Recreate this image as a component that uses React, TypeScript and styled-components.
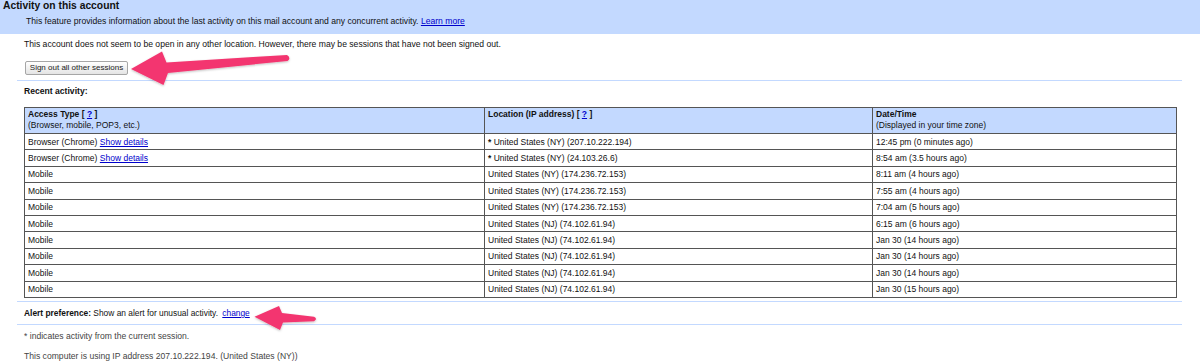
import React from 'react';
import styled, { createGlobalStyle } from 'styled-components';

const GlobalStyle = createGlobalStyle`
    body {
        margin: 0;
        background: #fff;
        font-family: "Liberation Sans", Arial, Helvetica, sans-serif;
        font-size: 8.6px;
        color: #111;
    }
`;

const Page = styled.div`
    position: relative;
    width: 1200px;
    height: 362px;
    overflow: hidden;
`;

const HeaderBand = styled.div`
    background: #c3d9ff;
    height: 34px;
    padding-left: 3px;
    box-sizing: border-box;
`;

const Title = styled.h1`
    margin: 0;
    font-size: 10.3px;
    line-height: 12px;
    font-weight: bold;
`;

const Intro = styled.div`
    margin: 3px 0 0 23px;
    line-height: 12px;
`;

const Content = styled.div`
    margin: 0 18px 0 17px;
`;

const Section = styled.div<{ $top: number; $bottom: number }>`
    border-bottom: 1px solid #c3d9ff;
    padding: ${(p) => p.$top}px 6px ${(p) => p.$bottom}px 7px;
`;

const Line = styled.div`
    line-height: 12px;
`;

const AlertLine = styled.div`
    line-height: 12px;
    font-size: 8.4px;
`;

const Note = styled.div<{ $gap: number }>`
    margin: ${(p) => p.$gap}px 0 0 7px;
    line-height: 12px;
    color: #444;
`;

const Link = styled.a<{ $gap?: number }>`
    color: #0000cc;
    text-decoration: underline;
    cursor: pointer;
    margin-left: ${(p) => p.$gap || 0}px;
`;

const Button = styled.button`
    display: block;
    margin: 11px 0 0 1px;
    height: 14px;
    width: 103px;
    padding: 0;
    font-family: "Liberation Sans", Arial, sans-serif;
    font-size: 8px;
    line-height: 12px;
    color: #222;
    background: linear-gradient(#ffffff, #e4e4e4);
    border: 1px solid #a6a6a6;
    border-radius: 2px;
`;

const Table = styled.table`
    margin-top: 10px;
    width: 1152px;
    table-layout: fixed;
    border-collapse: collapse;
    border: 1px solid #3f3f3f;
    font-size: 8.5px;
`;

const HeadCell = styled.th`
    background: #c3d9ff;
    border: 1px solid #555;
    padding: 1px 3px 2px;
    text-align: left;
    font-weight: normal;
    line-height: 11px;
    vertical-align: top;
`;

const Cell = styled.td`
    border: 1px solid #555;
    padding: 1.5px 3px;
    line-height: 12.4px;
    white-space: nowrap;
`;

const Star = styled.b`
    font-weight: bold;
`;

const Arrows = styled.svg`
    position: absolute;
    left: 0;
    top: 0;
    pointer-events: none;
`;

type Row = { access: string; details?: boolean; current?: boolean; location: string; time: string };

const rows: Row[] = [
    { access: 'Browser (Chrome)', details: true, current: true, location: 'United States (NY) (207.10.222.194)', time: '12:45 pm (0 minutes ago)' },
    { access: 'Browser (Chrome)', details: true, current: true, location: 'United States (NY) (24.103.26.6)', time: '8:54 am (3.5 hours ago)' },
    { access: 'Mobile', location: 'United States (NY) (174.236.72.153)', time: '8:11 am (4 hours ago)' },
    { access: 'Mobile', location: 'United States (NY) (174.236.72.153)', time: '7:55 am (4 hours ago)' },
    { access: 'Mobile', location: 'United States (NY) (174.236.72.153)', time: '7:04 am (5 hours ago)' },
    { access: 'Mobile', location: 'United States (NJ) (74.102.61.94)', time: '6:15 am (6 hours ago)' },
    { access: 'Mobile', location: 'United States (NJ) (74.102.61.94)', time: 'Jan 30 (14 hours ago)' },
    { access: 'Mobile', location: 'United States (NJ) (74.102.61.94)', time: 'Jan 30 (14 hours ago)' },
    { access: 'Mobile', location: 'United States (NJ) (74.102.61.94)', time: 'Jan 30 (14 hours ago)' },
    { access: 'Mobile', location: 'United States (NJ) (74.102.61.94)', time: 'Jan 30 (15 hours ago)' },
];

const App = () => {
    return (
        <React.Fragment>
            <GlobalStyle />
            <Page>
                <HeaderBand>
                    <Title>Activity on this account</Title>
                    <Intro>
                        This feature provides information about the last activity on this mail account and any concurrent activity.{' '}
                        <Link>Learn more</Link>
                    </Intro>
                </HeaderBand>
                <Content>
                    <Section $top={4} $bottom={5}>
                        <Line>
                            This account does not seem to be open in any other location. However, there may be sessions that have not been signed out.
                        </Line>
                        <Button>Sign out all other sessions</Button>
                    </Section>
                    <Section $top={4} $bottom={3}>
                        <Line>
                            <b>Recent activity:</b>
                        </Line>
                        <Table>
                            <colgroup>
                                <col style={{ width: 460 }} />
                                <col style={{ width: 388 }} />
                                <col style={{ width: 304 }} />
                            </colgroup>
                            <thead>
                                <tr>
                                    <HeadCell>
                                        <b>Access Type [ <Link>?</Link> ]</b>
                                        <br />
                                        (Browser, mobile, POP3, etc.)
                                    </HeadCell>
                                    <HeadCell>
                                        <b>Location (IP address) [ <Link>?</Link> ]</b>
                                    </HeadCell>
                                    <HeadCell>
                                        <b>Date/Time</b>
                                        <br />
                                        (Displayed in your time zone)
                                    </HeadCell>
                                </tr>
                            </thead>
                            <tbody>
                                {rows.map((r, i) => (
                                    <tr key={i}>
                                        <Cell>
                                            {r.access}
                                            {r.details && (
                                                <>
                                                    {' '}
                                                    <Link>Show details</Link>
                                                </>
                                            )}
                                        </Cell>
                                        <Cell>
                                            {r.current && <Star>* </Star>}
                                            {r.location}
                                        </Cell>
                                        <Cell>{r.time}</Cell>
                                    </tr>
                                ))}
                            </tbody>
                        </Table>
                    </Section>
                    <Section $top={5} $bottom={5}>
                        <AlertLine>
                            <b>Alert preference:</b> Show an alert for unusual activity.{' '}
                            <Link $gap={2}>change</Link>
                        </AlertLine>
                    </Section>
                    <Note $gap={5}>* indicates activity from the current session.</Note>
                    <Note $gap={8}>This computer is using IP address 207.10.222.194. (United States (NY))</Note>
                </Content>
                <Arrows width="1200" height="362" viewBox="0 0 1200 362">
                    <defs>
                        <filter id="shade" x="-10%" y="-30%" width="120%" height="160%">
                            <feDropShadow dx="0" dy="1" stdDeviation="1.2" floodColor="#000" floodOpacity="0.25" />
                        </filter>
                    </defs>
                    <g fill="#f3366f" filter="url(#shade)">
                        <path d="M131 69 L162 51.5 L166.5 62.5 L287 55 Q291.5 58 287.5 61 L168 73 L163.5 85 Z" />
                        <path d="M254.5 316.8 L279 306 L282 313 L314 316.8 Q318 319 314 321.2 L283 322.6 L280 330 Z" />
                    </g>
                </Arrows>
            </Page>
        </React.Fragment>
    );
};

export default App;
